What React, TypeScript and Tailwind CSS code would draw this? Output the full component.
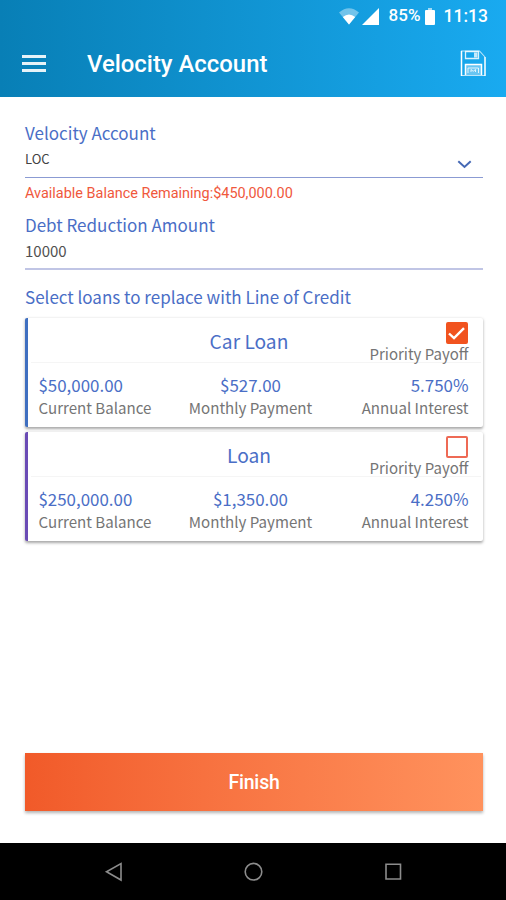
import { clsx } from "clsx";

type Loan = {
  name: string;
  balance: string;
  payment: string;
  interest: string;
  priority: boolean;
  accent: string;
};

const loans: Loan[] = [
  {
    name: "Car Loan",
    balance: "$50,000.00",
    payment: "$527.00",
    interest: "5.750%",
    priority: true,
    accent: "border-[#3f6fc0]",
  },
  {
    name: "Loan",
    balance: "$250,000.00",
    payment: "$1,350.00",
    interest: "4.250%",
    priority: false,
    accent: "border-[#6a4bb5]",
  },
];

const StatusBar = () => (
  <div className="flex h-8 items-center justify-end pr-[18px] text-[17.5px] font-medium">
    <svg className="mr-[3px] h-[17px] w-5" viewBox="0 0 20 17">
      <path d="M0 4.5Q10 -4 20 4.5L10 16.5Z" fill="#fff" fillOpacity=".4" />
      <path d="M3.8 9Q10 4 16.2 9L10 16.5Z" fill="#fff" />
    </svg>
    <svg className="mr-[10px] size-[17px]" viewBox="0 0 17 17">
      <path d="M17 0V17H0Z" fill="#fff" />
    </svg>
    <span className="w-[31px] text-[17px] whitespace-nowrap">85%</span>
    <svg className="mr-[9px] ml-[5px] h-[17px] w-[10px]" viewBox="0 0 10 17">
      <path d="M3 0h4v2H3Z" fill="#fff" fillOpacity=".6" />
      <path d="M1 2H9a1 1 0 0 1 1 1V16a1 1 0 0 1-1 1H1a1 1 0 0 1-1-1V3a1 1 0 0 1 1-1Z" fill="#fff" />
    </svg>
    <span>11:13</span>
  </div>
);

const SaveIcon = () => (
  <svg className="h-[27px] w-[26px]" viewBox="0 0 26 27" fill="none" stroke="#fff">
    <path d="M1.5 1V26M25 7V26" strokeWidth="1.5" />
    <path d="M1 1H19.5L25 7M1 25.5H25" strokeWidth="1.1" strokeOpacity=".7" />
    <path d="M5.5 1.5V8.5H18.5V1.5Z" strokeOpacity=".85" strokeWidth="1.3" />
    <path d="M14 2.5h3.5v5H14Z" fill="#fff" fillOpacity=".75" stroke="none" />
    <path d="M5.5 25V14.5H21.5V25" strokeWidth="1.5" />
    <path d="M5 14.5H21.5V25H5Z" fill="#fff" fillOpacity=".35" stroke="none" />
    <path d="M8 23v-5h10.5v5M11 22v-2.5l2.2 1.8l2.3-1.8v2.5" strokeOpacity=".8" />
  </svg>
);

const Checkbox = ({ checked }: { checked: boolean }) => (
  <span
    className={clsx(
      "mr-px grid size-[22px] place-items-center rounded-[2px] border-2",
      checked ? "border-[#f1531f] bg-[#f1531f]" : "border-[#ee6a55] bg-white",
    )}
  >
    {checked && (
      <svg className="h-[13px] w-[17px]" viewBox="0 0 17 13" fill="none">
        <path d="M1 6.5L6 11.2L16 1.2" stroke="#fff" strokeWidth="2.4" />
      </svg>
    )}
  </span>
);

const LoanCard = ({ loan }: { loan: Loan }) => (
  <article
    className={clsx(
      "h-[109px] rounded-[2px] border-l-[3px] bg-white pr-[14.5px] pl-[10.5px]",
      "shadow-[0_1.5px_3px_rgba(0,0,0,0.35)]",
      loan.accent,
    )}
  >
    <div className="-mr-3 -ml-2 grid h-[45px] grid-cols-[138px_145px_1fr] border-b border-[#f5f5f5] pr-3 pl-2">
      <h2 className="col-start-2 pt-2 text-center text-[19.2px]/[30px]">{loan.name}</h2>
      <div className="flex flex-col items-end pt-1">
        <Checkbox checked={loan.priority} />
        <span className="text-[15px]/[20px] whitespace-nowrap text-[#757575]">
          Priority Payoff
        </span>
      </div>
    </div>
    <div className="grid grid-cols-[141px_142px_1fr] pt-[10px] text-[16.9px]/[23px]">
      <Figure value={loan.balance} label="Current Balance" />
      <Figure value={loan.payment} label="Monthly Payment" className="text-center" />
      <Figure value={loan.interest} label="Annual Interest" className="text-right" />
    </div>
  </article>
);

const Figure = ({
  value,
  label,
  className,
}: {
  value: string;
  label: string;
  className?: string;
}) => (
  <div className={className}>
    <p>{value}</p>
    <p className="text-[15.1px]/[23px] whitespace-nowrap text-[#757575]">{label}</p>
  </div>
);

export default function App() {
  return (
    <div className="flex h-[900px] w-[506px] flex-col bg-white font-['Roboto',sans-serif]">
      <header className="h-[97px] bg-linear-to-r from-[#087fb6] to-[#19aaf0] text-white">
        <StatusBar />
        <div className="flex h-[62px] items-center pr-[20px] pl-[22px]">
          <div className="flex w-6 flex-col gap-1">
            <span className="h-[3px] bg-white/90" />
            <span className="h-[3px] bg-white/90" />
            <span className="h-[3px] bg-white/90" />
          </div>
          <h1 className="ml-[41px] flex-1 pt-1 text-[23.9px] font-medium">Velocity Account</h1>
          <SaveIcon />
        </div>
      </header>

      <main className="flex flex-1 flex-col pt-6 pr-[23px] pl-[25px] font-['Noto_Sans_CJK_SC',sans-serif] text-[#4a6ec6]">
        <label className="text-[17px]/[24px]">Velocity Account</label>
        <div className="flex h-[33px] justify-between border-b-[1.5px] border-[#8b9bd3]">
          <span className="text-[13px]/[27px] text-[#424242]">LOC</span>
          <svg className="mt-[15px] mr-[11px] h-[9px] w-[15px]" viewBox="0 0 15 9" fill="none">
            <path d="M1.3 1.3L7.5 7L13.7 1.3" stroke="#4569b5" strokeWidth="2" />
          </svg>
        </div>
        <p className="font-['Roboto',sans-serif] text-[14.45px]/[31px] text-[#f0583c]">
          Available Balance Remaining:$450,000.00
        </p>
        <label className="mt-[4px] text-[17px]/[24px]">Debt Reduction Amount</label>
        <div className="h-[33px] border-b-2 border-[#c0c5e5] text-[15px]/[28px] text-[#505050]">
          10000
        </div>
        <p className="mt-[15px] text-[17px]/[24px]">Select loans to replace with Line of Credit</p>
        <section className="mt-[9px] flex flex-col gap-[5.4px]">
          {loans.map((loan) => (
            <LoanCard key={loan.name} loan={loan} />
          ))}
        </section>
        <button className="mt-auto mb-8 h-[58px] bg-linear-to-r from-[#f15a29] to-[#ff925d] pt-0.5 font-['Roboto',sans-serif] text-[19.5px] font-medium tracking-[-0.2px] text-white shadow-[0_2px_3px_rgba(0,0,0,0.3)]">
          Finish
        </button>
      </main>

      <nav className="flex h-[57px] items-center bg-black">
        <svg className="h-full w-full" viewBox="0 0 506 57" fill="none" stroke="#8c8c8c" strokeWidth="1.6">
          <path d="M121 20.5V37L106.5 28.7Z" />
          <circle cx="253.5" cy="28.7" r="8.3" />
          <path d="M386 21.3H400.5V36H386Z" />
        </svg>
      </nav>
    </div>
  );
}
